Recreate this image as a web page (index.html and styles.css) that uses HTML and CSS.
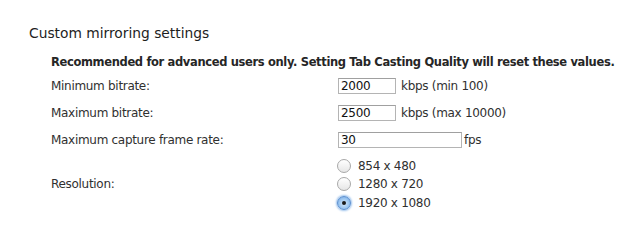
FILE: index.html
```html
<!DOCTYPE html>
<html>
<head>
<meta charset="utf-8">
<link rel="stylesheet" href="styles.css">
</head>
<body>
<section class="settings">
  <h2 class="title">Custom mirroring settings</h2>
  <div class="content">
    <p class="warning">Recommended for advanced users only. Setting Tab Casting Quality will reset these values.</p>
    <div class="grid">
      <div class="label">Minimum bitrate:</div>
      <div class="field"><span class="input short">2000</span><span class="unit">kbps (min 100)</span></div>
      <div class="label">Maximum bitrate:</div>
      <div class="field"><span class="input short">2500</span><span class="unit">kbps (max 10000)</span></div>
      <div class="label">Maximum capture frame rate:</div>
      <div class="field"><span class="input long">30</span><span class="unit tight">fps</span></div>
      <div class="label res-label">Resolution:</div>
      <div class="radios">
        <div class="radio-row"><span class="radio"></span><span class="radio-text">854 x 480</span></div>
        <div class="radio-row"><span class="radio"></span><span class="radio-text">1280 x 720</span></div>
        <div class="radio-row"><span class="radio checked"></span><span class="radio-text">1920 x 1080</span></div>
      </div>
    </div>
  </div>
</section>
</body>
</html>
```
FILE: styles.css
```css
html, body {
  margin: 0;
  padding: 0;
  background: #ffffff;
}
body {
  font-family: "DejaVu Sans", "Liberation Sans", sans-serif;
  color: #303030;
  width: 632px;
  height: 229px;
  overflow: hidden;
}
.settings {
  padding: 24px 0 0 29px;
}
.title {
  margin: 0;
  font-size: 13.8px;
  font-weight: normal;
  color: #1e1e1e;
  line-height: 18px;
}
.content {
  padding-left: 22px;
}
.warning {
  margin: 13px 0 0 0;
  font-size: 11.5px;
  font-weight: bold;
  letter-spacing: -0.35px;
  line-height: 15px;
  color: #262626;
  white-space: nowrap;
}
.grid {
  display: grid;
  grid-template-columns: 287px auto;
  row-gap: 11px;
  margin-top: 8px;
  font-size: 12px;
  letter-spacing: -0.3px;
}
.label {
  display: flex;
  align-items: center;
  line-height: 16px;
}
.field {
  display: flex;
  align-items: center;
}
.input {
  box-sizing: border-box;
  height: 16px;
  border: 1px solid #b4b4b4;
  border-top-color: #a0a0a0;
  padding: 0 0 0 2px;
  line-height: 14px;
  color: #111;
  background: #fff;
}
.input.short { width: 58px; }
.input.long { width: 124px; }
.unit {
  margin-left: 5px;
  line-height: 16px;
}
.unit.tight {
  margin-left: 2px;
}
.radios {
  display: flex;
  flex-direction: column;
  gap: 4.5px;
  margin-top: -0.5px;
}
.radio-row {
  display: flex;
  align-items: center;
  height: 14px;
}
.radio {
  box-sizing: border-box;
  width: 14px;
  height: 14px;
  border-radius: 50%;
  border: 1px solid #a8a8a8;
  background: linear-gradient(#ffffff, #e6e6e6);
  margin-left: -1px;
  margin-right: 7px;
  display: flex;
  align-items: center;
  justify-content: center;
}
.radio.checked {
  border-color: #5b8fd0;
  background: radial-gradient(circle at 50% 55%, #d6e9fb 0, #9cc6f0 55%, #6ca2e0 100%);
  box-shadow: 0 0 2px 1px #9cc2ec;
}
.radio.checked::after {
  content: "";
  width: 4px;
  height: 4px;
  border-radius: 50%;
  background: #1a1a1a;
}
.radio-text {
  line-height: 14px;
}
```
